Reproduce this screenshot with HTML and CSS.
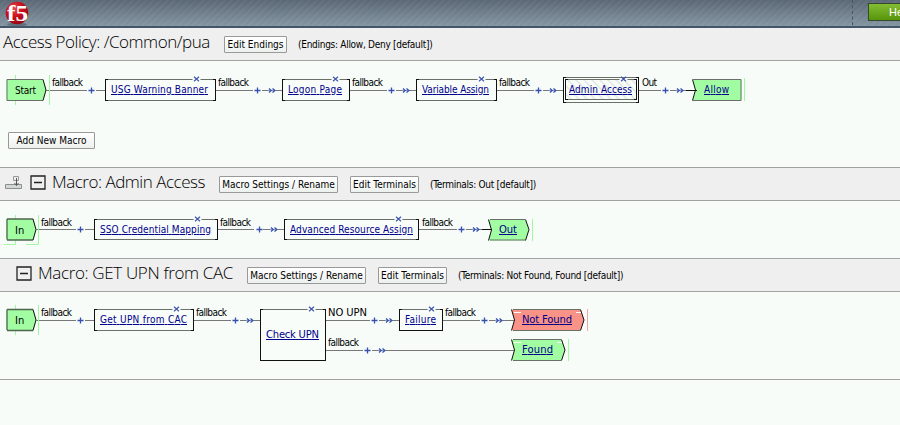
FILE: index.html
```html
<!DOCTYPE html>
<html lang="en">
<head>
<meta charset="utf-8">
<title>Access Policy</title>
<link rel="stylesheet" href="styles.css">
</head>
<body>
<svg class="defs" width="0" height="0" aria-hidden="true">
  <defs>
    <pattern id="hatch" width="8" height="8" patternUnits="userSpaceOnUse"><path d="M-2-2 10 10M-2 6 2 10M6-2 10 2" stroke="#e3e7e4" stroke-width="1.4"/></pattern>
    <radialGradient id="ball" cx=".38" cy=".3" r=".75"><stop offset="0" stop-color="#e8484f"/><stop offset=".5" stop-color="#c90e1b"/><stop offset="1" stop-color="#8d0712"/></radialGradient>
    <g id="plus"><path d="M-3 0H3M0-3V3" stroke="#3550b0" stroke-width="1.3" fill="none"/></g>
    <g id="arrows"><path d="M0 0H8" stroke="#8d98c0"/><path d="M1-2 3.2 0 1 2M4.5-2 6.9 0 4.5 2" stroke="#3550b0" stroke-width="1.3" fill="none"/></g>
    <g id="close"><path d="M-4-1H4V1H-4Z" fill="#f7fcf8"/><path d="M-2.5-2.2 2.5 2.2M2.5-2.2-2.5 2.2" stroke="#3f56ad" stroke-width="1.2"/></g>
    <g id="in"><path d="M6.5-10.5H33.5L36.5 0 33.5 10.5H6.5Z" fill="#a2fca2"/><path d="M7 10V-10.5M7-10.5H33M7 10.5H33" stroke="#4e654e" stroke-width="1.3"/><path d="M33-10.5 36 0 33 10.5" stroke="#111" fill="none"/></g>
  </defs>
</svg>

<header class="topbar">
  <svg class="logo" width="28" height="26" viewBox="0 0 28 26">
    <ellipse cx="12" cy="23.5" rx="10" ry="1.8" fill="#3e4b57" opacity=".5"/>
    <circle cx="12" cy="12" r="11.3" fill="url(#ball)"/>
    <text class="logo-text" x="2" y="19.5" textLength="21" lengthAdjust="spacingAndGlyphs">f5</text>
  </svg>
  <div class="help"><span class="help-button">Help</span></div>
</header>

<div class="band policy-band">
  <h1 class="title title-policy">Access Policy: /Common/pua</h1>
  <button class="button endings">Edit Endings</button>
  <span class="note note-policy">(Endings: Allow, Deny [default])</span>
</div>
<main>
<section class="flow policy-flow">
  <svg class="diagram" width="900" height="60" viewBox="0 61 900 60">
    <g class="wire"><path d="M46 90.5H87M96 90.5H105M215 90.5H253M262 90.5H282M349 90.5H387M396 90.5H416M496 90.5H534M543 90.5H563M638 90.5H661M670 90.5H692"/></g>
    <path class="green-line" d="M49.5 75V105M744.5 78V101M15.5 75V79M15.5 101V105"/>
    <path d="M6.5 79.5H43.5L46.5 90 43.5 100.5H6.5Z" fill="#a2fca2"/>
    <path class="edge" d="M43 79.5H7V100.5H43"/><path class="edge-dark" d="M43 79.5 46 90 43 100.5"/>
    <text x="15" y="94" textLength="21">Start</text>
    <text x="52" y="86" textLength="31">fallback</text><use href="#plus" x="91.5" y="90.5"/>
    <rect class="node" x="105.5" y="79.5" width="110" height="21"/><path class="edge" d="M108 79.5H213M108 100.5H213"/>
    <use href="#close" x="196.5" y="79"/><a href="#"><text x="111" y="93" textLength="97">USG Warning Banner</text></a>
    <text x="218" y="86" textLength="31">fallback</text><use href="#plus" x="257.5" y="90.5"/><use href="#arrows" x="268" y="90.5"/>
    <rect class="node" x="282.5" y="79.5" width="67" height="21"/><path class="edge" d="M285 79.5H347M285 100.5H347"/>
    <use href="#close" x="335.5" y="79"/><a href="#"><text x="288" y="93" textLength="54">Logon Page</text></a>
    <text x="352" y="86" textLength="31">fallback</text><use href="#plus" x="391.5" y="90.5"/><use href="#arrows" x="402" y="90.5"/>
    <rect class="node" x="416.5" y="79.5" width="80" height="21"/><path class="edge" d="M419 79.5H494M419 100.5H494"/>
    <use href="#close" x="481.5" y="79"/><a href="#"><text x="422" y="93" textLength="67">Variable Assign</text></a>
    <text x="499" y="86" textLength="31">fallback</text><use href="#plus" x="538.5" y="90.5"/><use href="#arrows" x="549" y="90.5"/>
    <rect class="node" x="563.5" y="77.5" width="75" height="25"/><rect class="node hatched" x="565.5" y="79.5" width="71" height="20"/>
    <path class="edge" d="M566 77.5H636M566 102.5H636M568 79.5H634M568 99.5H634"/>
    <use href="#close" x="623.5" y="79"/><a href="#"><text x="569" y="93" textLength="63">Admin Access</text></a>
    <text x="642" y="86" textLength="15">Out</text><use href="#plus" x="665.5" y="90.5"/><use href="#arrows" x="676" y="90.5"/>
    <path d="M692.5 79.5H741.5V100.5H692.5L695.5 90Z" fill="#a2fca2"/><path class="edge" d="M693 79.5H741V100.5H693"/><path class="edge-dark" d="M692.5 79.5 695.5 90 692.5 100.5M686 90.5H697"/>
    <a href="#"><text x="704" y="93" textLength="25">Allow</text></a>
  </svg>
  <button class="button add-macro">Add New Macro</button>
</section>

<div class="band">
  <svg class="macro-icon" width="17" height="14" viewBox="0 0 17 14"><path d="M.5 8.5H16.5V12.5H.5Z" fill="#d3d7d5" stroke="#8b908e"/><path d="M8.5 4.5V.5H13.5V4.5Z" fill="#eee" stroke="#999"/><path d="M11.5 2V9M9.5 7 11.5 9.5 13.5 7" stroke="#555" fill="none"/></svg>
  <svg class="toggle" width="16" height="15" viewBox="0 0 16 15"><path d="M1 1H15V14H1ZM4 7.5H12" fill="none" stroke="#222" stroke-width="1.3"/></svg>
  <h2 class="title title-admin">Macro: Admin Access</h2>
  <button class="button settings">Macro Settings / Rename</button>
  <button class="button terminals">Edit Terminals</button>
  <span class="note note-admin">(Terminals: Out [default])</span>
</div>
<section class="flow">
  <svg class="diagram" width="900" height="57" viewBox="0 201 900 57">
    <g class="wire"><path d="M36 229.5H76M85 229.5H94M217 229.5H254M263 229.5H284M419 229.5H457M466 229.5H488"/></g>
    <path class="green-line" d="M15.5 215V219M15.5 240V244.5H4M26 244.5H38.5V215M532.5 219V241"/>
    <use href="#in" y="229.5"/><text class="wide" x="15" y="234">In</text>
    <text x="41" y="226" textLength="31">fallback</text><use href="#plus" x="80.5" y="229.5"/>
    <rect class="node" x="94.5" y="219.5" width="123" height="20"/><path class="edge" d="M97 219.5H215M97 239.5H215"/>
    <use href="#close" x="197.5" y="219"/><a href="#"><text x="100" y="233" textLength="111">SSO Credential Mapping</text></a>
    <text x="220" y="226" textLength="31">fallback</text><use href="#plus" x="259.5" y="229.5"/><use href="#arrows" x="270" y="229.5"/>
    <rect class="node" x="284.5" y="219.5" width="134" height="20"/><path class="edge" d="M287 219.5H416M287 239.5H416"/>
    <use href="#close" x="398.5" y="219"/><a href="#"><text x="290" y="233" textLength="123">Advanced Resource Assign</text></a>
    <text x="422" y="226" textLength="31">fallback</text><use href="#plus" x="461.5" y="229.5"/><use href="#arrows" x="472" y="229.5"/>
    <path d="M488.5 219.5H525.5L529 229.5 525.5 240.5H488.5L491.5 230Z" fill="#a2fca2"/><path class="edge" d="M490 219.5H525M490 240H525"/><path class="edge-dark" d="M488.5 219.5 491.5 230 488.5 240.5M525.5 219.5 529 229.5 525.5 240.5M482 229.5H492"/>
    <a href="#"><text class="wide" x="499" y="233" textLength="18">Out</text></a>
  </svg>
</section>

<div class="band upn-band">
  <svg class="toggle" width="16" height="15" viewBox="0 0 16 15"><path d="M1 1H15V14H1ZM4 7.5H12" fill="none" stroke="#222" stroke-width="1.3"/></svg>
  <h2 class="title title-upn">Macro: GET UPN from CAC</h2>
  <button class="button settings">Macro Settings / Rename</button>
  <button class="button terminals">Edit Terminals</button>
  <span class="note note-upn">(Terminals: Not Found, Found [default])</span>
</div>
<section class="flow last-flow">
  <svg class="diagram" width="900" height="87" viewBox="0 292 900 87">
    <g class="wire"><path d="M36 320.5H76M85 320.5H94M193 320.5H231M240 320.5H260M325 320.5H370M379 320.5H399M442 320.5H480M489 320.5H514M325 350.5H363M372 350.5H514"/></g>
    <path class="green-line" d="M15.5 305V309M15.5 331V335M38.5 305V335M568.5 339V361"/>
    <use href="#in" y="320"/><text class="wide" x="15" y="324">In</text>
    <text x="41" y="316" textLength="31">fallback</text><use href="#plus" x="80.5" y="320.5"/>
    <rect class="node" x="94.5" y="309.5" width="99" height="21"/><path class="edge" d="M97 309.5H191M97 330.5H191"/>
    <use href="#close" x="176.5" y="309"/><a href="#"><text x="100" y="323" textLength="87">Get UPN from CAC</text></a>
    <text x="196" y="316" textLength="31">fallback</text><use href="#plus" x="235.5" y="320.5"/><use href="#arrows" x="246" y="320.5"/>
    <rect class="node" x="260.5" y="309.5" width="65" height="51"/><path class="edge" d="M263 309.5H323"/>
    <use href="#close" x="311.5" y="309"/><a href="#"><text class="wide" x="266" y="338" textLength="53">Check UPN</text></a>
    <text class="wide" x="328" y="316" textLength="39">NO UPN</text><use href="#plus" x="374.5" y="320.5"/><use href="#arrows" x="385" y="320.5"/>
    <rect class="node" x="399.5" y="309.5" width="43" height="21"/><path class="edge" d="M402 309.5H440"/>
    <use href="#close" x="431.5" y="309"/><a href="#"><text x="405" y="323" textLength="31">Failure</text></a>
    <text x="445" y="316" textLength="31">fallback</text><use href="#plus" x="484.5" y="320.5"/><use href="#arrows" x="495" y="320.5"/>
    <path d="M511.5 309.5H580.5L584 320 580.5 330.5H511.5L514.5 320Z" fill="#f99287"/><path class="edge" d="M513 309.5H580M513 330.5H580"/><path class="edge-dark" d="M511.5 309.5 514.5 320 511.5 330.5M580.5 309.5 584 320 580.5 330.5"/>
    <path d="M587.5 309V331" stroke="#efa8a8"/><path d="M514 312.5H521M576 312.5H581" stroke="#fff"/>
    <a href="#"><text class="wide" x="522" y="323" textLength="50">Not Found</text></a>
    <text x="328" y="346" textLength="31">fallback</text><use href="#plus" x="367.5" y="350.5"/><use href="#arrows" x="378" y="350.5"/>
    <path d="M511.5 339.5H561.5L565 350 561.5 360.5H511.5L514.5 350Z" fill="#a2fca2"/><path class="edge" d="M513 339.5H561M513 360.5H561"/><path class="edge-dark" d="M511.5 339.5 514.5 350 511.5 360.5M561.5 339.5 565 350 561.5 360.5"/>
    <path d="M514 342.5H521M557 342.5H562" stroke="#fff"/>
    <a href="#"><text class="wide" x="522" y="353" textLength="31">Found</text></a>
  </svg>
</section>
</main>
</body>
</html>
```

FILE: styles.css
```css
* { box-sizing: border-box; }
body { margin: 0; background: #f7fcf8; color: #000; font: 10px "DejaVu Sans Condensed", "DejaVu Sans", sans-serif; overflow: hidden; }
.defs { display: block; height: 0; }
.topbar { display: flex; justify-content: space-between; height: 28px; padding-left: 5px; border-bottom: 2px solid #43566a; overflow: hidden;
  background: repeating-linear-gradient(135deg, transparent 0 3px, rgba(255,255,255,.04) 3px 5px), linear-gradient(#5b6875, #8495a2); }
.logo { flex: none; margin-top: 1px; }
.logo-text { font: bold 24px "Liberation Serif", serif; fill: #fff; }
.help { flex: none; width: 48px; padding: 3px 0 0 15px; border-left: 1px dashed #465562; height: 25px; overflow: hidden; }
.help-button { display: block; width: 60px; height: 18px; padding-left: 20px; border: 1px solid #36482e; background: linear-gradient(#83bd32, #57950b); color: #fff; font: 11px/16px "Liberation Sans", sans-serif; }
.band { display: flex; align-items: flex-start; height: 34px; border-top: 1px solid #a2a2a2; border-bottom: 1px solid #a2a2a2; background: #efefef; padding-left: 5px; }
.policy-band { height: 33px; border-top: 0; padding-left: 3px; }
.upn-band { padding-left: 16px; }
.title { flex: none; margin: 2px 0 0; font: 300 17px/23px "Open Sans", "Noto Sans", sans-serif; white-space: nowrap; }
.title-policy { width: 221px; letter-spacing: -.48px; }
.title-admin { width: 167px; letter-spacing: -.48px; }
.title-upn { width: 209px; letter-spacing: -.35px; }
.button { flex: none; height: 17px; margin: 8px 0 0; padding: 0; border: 1px solid #999; border-radius: 1px; background: linear-gradient(#fff, #edf1ee); font: 10px/14px "DejaVu Sans Condensed", "DejaVu Sans", sans-serif; color: #000; white-space: nowrap; }
.endings { width: 63px; }
.settings { width: 119px; }
.terminals { width: 69px; margin-left: 12px; }
.note { margin: 9px 0 0 11px; line-height: 15px; white-space: nowrap; letter-spacing: -.28px; }
.macro-icon { margin: 8px 8px 0 0; }
.toggle { margin: 7px 6px 0 0; }
.flow { height: 57px; }
.policy-flow { height: 106px; }
.last-flow { height: 88px; border-bottom: 1px solid #a2a2a2; }
.diagram { display: block; }
.diagram text { font: 10px "DejaVu Sans Condensed", "DejaVu Sans", sans-serif; fill: #000; }
.diagram .wide { font-family: "DejaVu Sans", sans-serif; }
.diagram a text { fill: #00008b; text-decoration: underline; }
.wire path { stroke: #777; stroke-width: 1.2; }
.node { fill: #f9fdfa; stroke: #111; }
.hatched { fill: url(#hatch); }
.edge { fill: none; stroke: #687068; }
.edge-dark { fill: none; stroke: #111; }
.green-line { fill: none; stroke: #a0f8a0; }
.add-macro { display: block; width: 87px; margin: 11px 0 0 8px; }
```
